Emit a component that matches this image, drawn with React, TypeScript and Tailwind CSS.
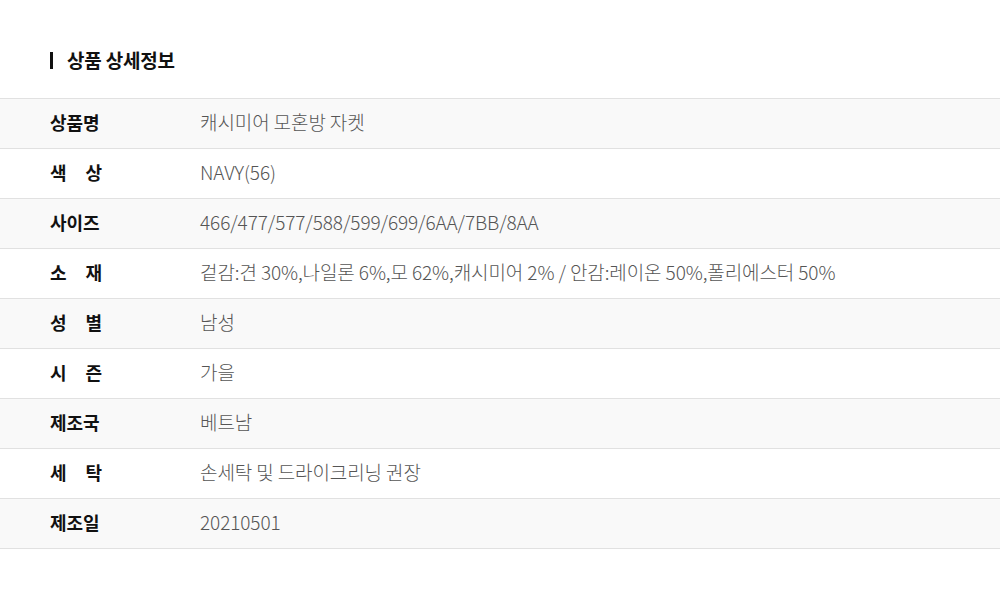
const rows: { label: string[]; value: string }[] = [
  { label: ['상품명'], value: '캐시미어 모혼방 자켓' },
  { label: ['색', '상'], value: 'NAVY(56)' },
  { label: ['사이즈'], value: '466/477/577/588/599/699/6AA/7BB/8AA' },
  { label: ['소', '재'], value: '겉감:견 30%,나일론 6%,모 62%,캐시미어 2% / 안감:레이온 50%,폴리에스터 50%' },
  { label: ['성', '별'], value: '남성' },
  { label: ['시', '즌'], value: '가을' },
  { label: ['제조국'], value: '베트남' },
  { label: ['세', '탁'], value: '손세탁 및 드라이크리닝 권장' },
  { label: ['제조일'], value: '20210501' },
];

export default function App() {
  return (
    <div className="min-h-screen w-full bg-white font-['Noto_Sans_CJK_KR',sans-serif] pt-[49px]">
      <h2 className="flex items-center gap-[14px] px-[50px] h-[22px] text-[19px] font-bold text-[#111] tracking-[-0.2px]">
        <span className="w-[3px] h-[17px] bg-[#111]" />
        상품 상세정보
      </h2>

      <div className="mt-[27px] border-t border-[#e1e1e1]">
        {rows.map((row, i) => (
          <div
            key={i}
            className={`flex items-center h-[50px] pb-[3px] border-b border-[#e1e1e1] px-[50px] ${i % 2 === 0 ? 'bg-[#f9f9f9]' : 'bg-white'}`}
          >
            <div className="w-[150px] shrink-0">
              <div className="flex justify-between w-[52px] text-[18px] font-bold text-[#111]">
                {row.label.map((l, j) => (
                  <span key={j}>{l}</span>
                ))}
              </div>
            </div>
            <div className="text-[19px] font-light text-[#555] tracking-[-0.1px]">{row.value}</div>
          </div>
        ))}
      </div>
    </div>
  );
}
